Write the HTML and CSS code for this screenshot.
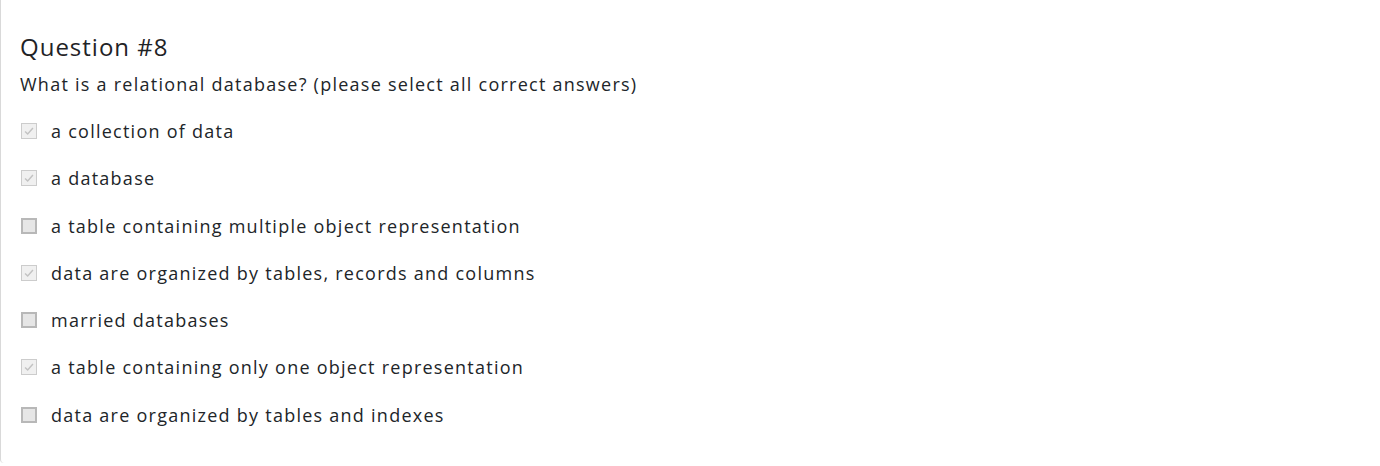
FILE: index.html
```html
<!DOCTYPE html>
<html>
<head>
<meta charset="utf-8">
<link rel="stylesheet" href="styles.css">
</head>
<body>
<div class="card">
  <h2 class="title">Question #8</h2>
  <p class="prompt">What is a relational database? (please select all correct answers)</p>
  <ul class="options">
    <li class="option"><span class="box checked"><svg viewBox="0 0 16 16"><path d="M3.5 8.5 L6.5 11.5 L12.5 4.5"/></svg></span><span class="label">a collection of data</span></li>
    <li class="option"><span class="box checked"><svg viewBox="0 0 16 16"><path d="M3.5 8.5 L6.5 11.5 L12.5 4.5"/></svg></span><span class="label">a database</span></li>
    <li class="option"><span class="box"></span><span class="label">a table containing multiple object representation</span></li>
    <li class="option"><span class="box checked"><svg viewBox="0 0 16 16"><path d="M3.5 8.5 L6.5 11.5 L12.5 4.5"/></svg></span><span class="label">data are organized by tables, records and columns</span></li>
    <li class="option"><span class="box"></span><span class="label">married databases</span></li>
    <li class="option"><span class="box checked"><svg viewBox="0 0 16 16"><path d="M3.5 8.5 L6.5 11.5 L12.5 4.5"/></svg></span><span class="label">a table containing only one object representation</span></li>
    <li class="option"><span class="box"></span><span class="label">data are organized by tables and indexes</span></li>
  </ul>
</div>
</body>
</html>
```
FILE: styles.css
```css
html, body {
  margin: 0;
  padding: 0;
  background: #ffffff;
}
body {
  font-family: "Open Sans", "Noto Sans", sans-serif;
  color: #212529;
}
.card {
  height: 463px;
  box-sizing: border-box;
  border-left: 1px solid #d9d9d9;
  border-bottom-left-radius: 4px;
  padding: 32px 19px 0 19px;
}
.title {
  margin: 0;
  font-size: 24px;
  font-weight: 400;
  letter-spacing: 1px;
  line-height: 30px;
  color: #1f2326;
}
.prompt {
  margin: 9px 0 0 0;
  font-size: 18px;
  letter-spacing: 1.25px;
  line-height: 26px;
}
.options {
  list-style: none;
  margin: 21px 0 0 0;
  padding: 0;
  display: flex;
  flex-direction: column;
  gap: 21.3px;
}
.option {
  display: flex;
  align-items: center;
  gap: 14px;
  height: 26px;
  font-size: 18px;
  letter-spacing: 1.25px;
}
.box {
  width: 16px;
  height: 16px;
  box-sizing: border-box;
  margin-left: 1px;
  border: 2px solid #b8b8b8;
  background: #e6e6e6;
  flex: none;
  display: flex;
}
.box.checked {
  border: 1px solid #cccccc;
  background: #f0f0f0;
}
.box svg {
  width: 14px;
  height: 14px;
}
.box svg path {
  fill: none;
  stroke: #c2c2c2;
  stroke-width: 1.6;
}
```
